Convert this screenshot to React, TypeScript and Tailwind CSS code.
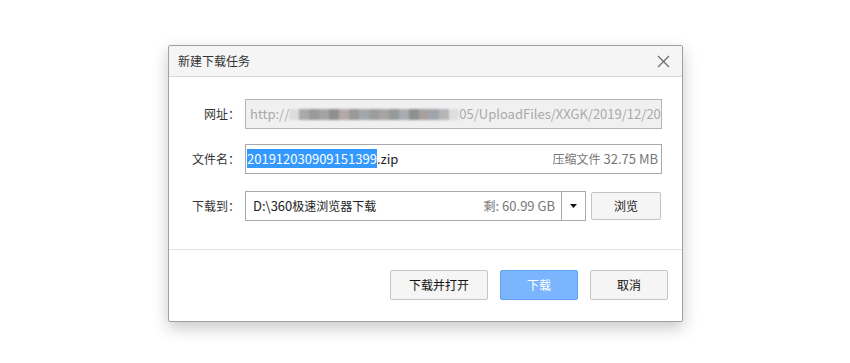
const font = { fontFamily: '"Microsoft YaHei", "Noto Sans CJK SC", "Noto Sans", sans-serif' }

const blur = [
  '#dcdcdc', '#a9a9a9', '#9a9a9a', '#a4a4a4', '#8f8f8f', '#b3aaa8', '#999999', '#a3a8ad',
  '#9c9c9c', '#a9a4a4', '#949a9a', '#a9adb3', '#8f8f8f', '#a8a0a0', '#a0a5ad', '#b5b5b5',
  '#dedede',
]

function Label({ text }: { text: string }) {
  return <div className="w-[71px] shrink-0 text-right text-[12px] text-[#333]">{text}</div>
}

export default function App() {
  return (
    <div className="w-[850px] h-[363px] bg-white pt-[45px] pl-[168px]" style={font}>
      <div className="w-[515px] h-[277px] border border-[#a0a0a0] rounded-[2px] bg-white shadow-[0_6px_16px_rgba(0,0,0,0.22)] flex flex-col">
        {/* title */}
        <div className="h-[31px] shrink-0 bg-[#f5f5f5] border-b border-[#d9d9d9] flex items-center justify-between pl-[9px] pr-[12px]">
          <span className="text-[12px] text-[#333]">新建下载任务</span>
          <svg width="13" height="13" viewBox="0 0 13 13">
            <path d="M1 1L12 12M12 1L1 12" stroke="#6b6b6b" strokeWidth="1.2" />
          </svg>
        </div>

        <div className="flex flex-col pr-[20px] pt-[22px]">
          {/* url */}
          <div className="flex items-center gap-[5px]">
            <Label text="网址：" />
            <div className="h-[30px] flex-1 border border-[#b5b5b5] bg-[#f0f0f0] flex items-center pl-[4px] overflow-hidden whitespace-nowrap text-[13px] text-[#aaa]">
              <span>http://</span>
              <div className="flex h-[11px] items-center blur-[1px]">
                {blur.map((c, i) => (
                  <div key={i} className="w-[10px] h-[11px]" style={{ backgroundColor: c }} />
                ))}
              </div>
              <span>05/UploadFiles/XXGK/2019/12/2019</span>
            </div>
          </div>

          {/* file name */}
          <div className="flex items-center gap-[5px] mt-[15px]">
            <Label text="文件名：" />
            <div className="h-[30px] flex-1 border border-[#a9a9a9] bg-white flex items-center justify-between pl-[1px] pr-[3px] text-[13px]">
              <span>
                <span className="bg-[#3399ff] text-white">201912030909151399</span>
                <span className="text-[#222]">.zip</span>
              </span>
              <span className="text-[#777]">
                <span className="text-[12px]">压缩文件</span> 32.75 MB
              </span>
            </div>
          </div>

          {/* save to */}
          <div className="flex items-center gap-[5px] mt-[17px]">
            <Label text="下载到：" />
            <div className="h-[30px] w-[341px] border border-[#a9a9a9] bg-white flex items-center text-[13px]">
              <span className="flex-1 pl-[7px] text-[#222]">
                D:\360<span className="text-[12px]">极速浏览器下载</span>
              </span>
              <span className="text-[#777] pr-[6px]">
                <span className="text-[12px]">剩</span>: 60.99 GB
              </span>
              <div className="w-[24px] h-full border-l border-[#a9a9a9] flex items-center justify-center">
                <svg width="7" height="4" viewBox="0 0 7 4">
                  <path d="M0 0H7L3.5 4Z" fill="#111" />
                </svg>
              </div>
            </div>
            <button className="w-[70px] h-[28px] border border-[#c4c4c4] rounded-[2px] bg-[#f5f5f5] text-[12px] text-[#222]">
              浏览
            </button>
          </div>
        </div>

        <div className="mt-[28px] border-t border-[#e3e3e3]" />

        <div className="flex justify-end gap-[12px] pr-[14px] pt-[20px]">
          <button className="w-[98px] h-[30px] border border-[#c6c6c6] rounded-[2px] bg-[#f5f5f5] text-[12px] text-[#111]">
            下载并打开
          </button>
          <button className="w-[78px] h-[30px] border border-[#5ea2f2] rounded-[2px] bg-[#7ab5fd] text-[12px] text-white">
            下载
          </button>
          <button className="w-[78px] h-[30px] border border-[#c6c6c6] rounded-[2px] bg-[#f5f5f5] text-[12px] text-[#111]">
            取消
          </button>
        </div>
      </div>
    </div>
  )
}
